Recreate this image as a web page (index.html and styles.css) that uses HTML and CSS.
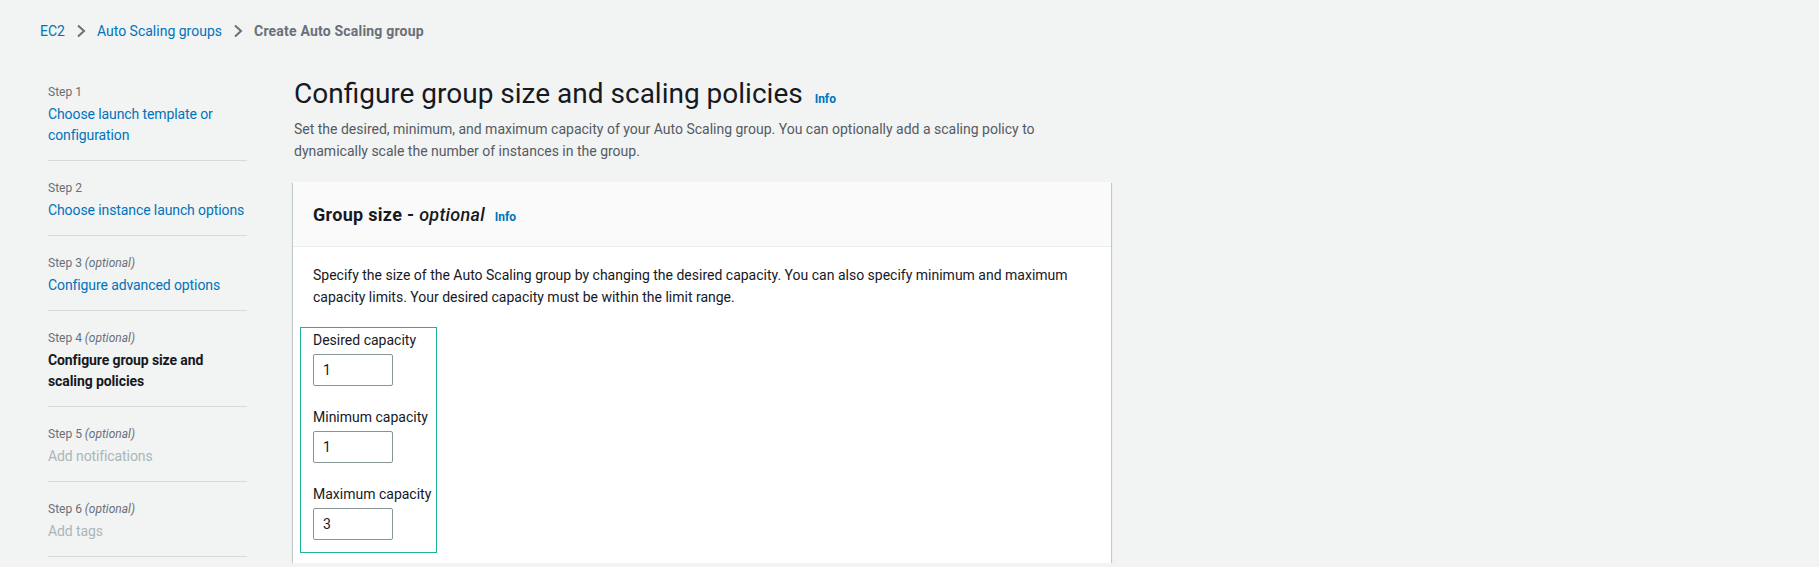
FILE: index.html
```html
<!DOCTYPE html>
<html lang="en">
<head>
<meta charset="utf-8">
<title>Create Auto Scaling group</title>
<link rel="stylesheet" href="styles.css">
</head>
<body>
<div class="page">
  <nav class="breadcrumbs">
    <a class="crumb-link" href="#">EC2</a>
    <svg class="chev" width="12" height="14" viewBox="0 0 12 14"><polyline points="3,1.5 9,7 3,12.5" fill="none" stroke="#687078" stroke-width="2"/></svg>
    <a class="crumb-link" href="#">Auto Scaling groups</a>
    <svg class="chev" width="12" height="14" viewBox="0 0 12 14"><polyline points="3,1.5 9,7 3,12.5" fill="none" stroke="#687078" stroke-width="2"/></svg>
    <span class="crumb-current">Create Auto Scaling group</span>
  </nav>

  <div class="layout">
    <aside class="steps">
      <div class="step">
        <div class="step-label">Step 1</div>
        <a class="step-link" href="#">Choose launch template or configuration</a>
      </div>
      <div class="step">
        <div class="step-label">Step 2</div>
        <a class="step-link" href="#">Choose instance launch options</a>
      </div>
      <div class="step">
        <div class="step-label">Step 3 <i>(optional)</i></div>
        <a class="step-link" href="#">Configure advanced options</a>
      </div>
      <div class="step">
        <div class="step-label">Step 4 <i>(optional)</i></div>
        <span class="step-current">Configure group size and scaling policies</span>
      </div>
      <div class="step">
        <div class="step-label">Step 5 <i>(optional)</i></div>
        <span class="step-disabled">Add notifications</span>
      </div>
      <div class="step">
        <div class="step-label">Step 6 <i>(optional)</i></div>
        <span class="step-disabled">Add tags</span>
      </div>
    </aside>

    <main class="main">
      <h1 class="title">Configure group size and scaling policies <a class="info" href="#">Info</a></h1>
      <p class="desc">Set the desired, minimum, and maximum capacity of your Auto Scaling group. You can optionally add a scaling policy to dynamically scale the number of instances in the group.</p>

      <section class="card">
        <header class="card-head">
          <h2 class="card-title">Group size - <i>optional</i> <a class="info" href="#">Info</a></h2>
        </header>
        <div class="card-body">
          <p class="card-text">Specify the size of the Auto Scaling group by changing the desired capacity. You can also specify minimum and maximum capacity limits. Your desired capacity must be within the limit range.</p>
          <div class="fields">
            <label class="field">
              <span class="field-label">Desired capacity</span>
              <input class="field-input" type="text" value="1">
            </label>
            <label class="field">
              <span class="field-label">Minimum capacity</span>
              <input class="field-input" type="text" value="1">
            </label>
            <label class="field">
              <span class="field-label">Maximum capacity</span>
              <input class="field-input" type="text" value="3">
            </label>
          </div>
        </div>
      </section>
    </main>
  </div>
</div>
</body>
</html>
```

FILE: styles.css
```css
* { box-sizing: border-box; }

html, body {
  margin: 0;
  padding: 0;
  background: #f2f3f3;
}

body {
  font-family: Roboto, "Open Sans", Arial, sans-serif;
  font-size: 14px;
  line-height: 22px;
  color: #16191f;
}

a { text-decoration: none; }

.page {
  padding: 0 40px;
}

.breadcrumbs {
  display: flex;
  align-items: center;
  height: 20px;
  margin-top: 21px;
  line-height: 20px;
}

.crumb-link { color: #0073bb; }

.chev {
  margin: 0 10px 0 10px;
}

.crumb-current {
  color: #687078;
  font-weight: 700;
  letter-spacing: 0.2px;
}

.layout {
  display: flex;
  align-items: flex-start;
  margin-top: 22px;
}

.steps {
  width: 199px;
  margin-left: 8px;
  margin-top: 2px;
  flex: none;
}

.step {
  padding: 17px 0 14px;
  border-bottom: 1px solid #d5dbdb;
}

.step-label {
  font-size: 12px;
  line-height: 20px;
  color: #687078;
  margin-bottom: 2px;
}

.step-label i { font-style: italic; }

.step-link,
.step-current,
.step-disabled {
  display: block;
  font-size: 14px;
  line-height: 21px;
  letter-spacing: -0.1px;
}

.step-link { color: #0073bb; }
.step-current { color: #16191f; font-weight: 700; }
.step-disabled { color: #aab7b8; }

.main {
  width: 818px;
  margin-left: 46px;
  margin-top: 13px;
}

.title {
  margin: 0;
  font-size: 28px;
  line-height: 36px;
  font-weight: 400;
  color: #16191f;
  padding-left: 1px;
}

.info {
  font-size: 12px;
  font-weight: 700;
  color: #0073bb;
  margin-left: 5px;
  line-height: 1;
  letter-spacing: 0;
}

.desc {
  margin: 6px 0 0 1px;
  color: #545b64;
  font-size: 14px;
  line-height: 22px;
}

.card {
  margin-top: 20px;
  background: #fff;
  box-shadow: 0 1px 1px 0 rgba(0, 28, 36, 0.3), 1px 1px 1px 0 rgba(0, 28, 36, 0.15), -1px 1px 1px 0 rgba(0, 28, 36, 0.15);
}

.card-head {
  background: #fafafa;
  border-bottom: 1px solid #eaeded;
  padding: 20px 20px 18px;
}

.card-title {
  margin: 0;
  font-size: 18px;
  line-height: 26px;
  font-weight: 700;
  letter-spacing: 0.3px;
}

.card-title i { font-weight: 500; }

.card-body {
  padding: 17px 20px 10px;
}

.card-text {
  margin: 0;
  color: #16191f;
}

.fields {
  display: inline-flex;
  flex-direction: column;
  gap: 20px;
  margin: 19px 0 0 -13px;
  padding: 1px 5px 12px 12px;
  border: 1px solid #1db39a;
}

.field {
  display: flex;
  flex-direction: column;
  gap: 3px;
}

.field-label {
  font-size: 14px;
  line-height: 22px;
  color: #16191f;
}

.field-input {
  width: 80px;
  height: 32px;
  border: 1px solid #879596;
  border-radius: 2px;
  padding: 0 9px;
  font: inherit;
  color: #16191f;
  background: #fff;
}
```
